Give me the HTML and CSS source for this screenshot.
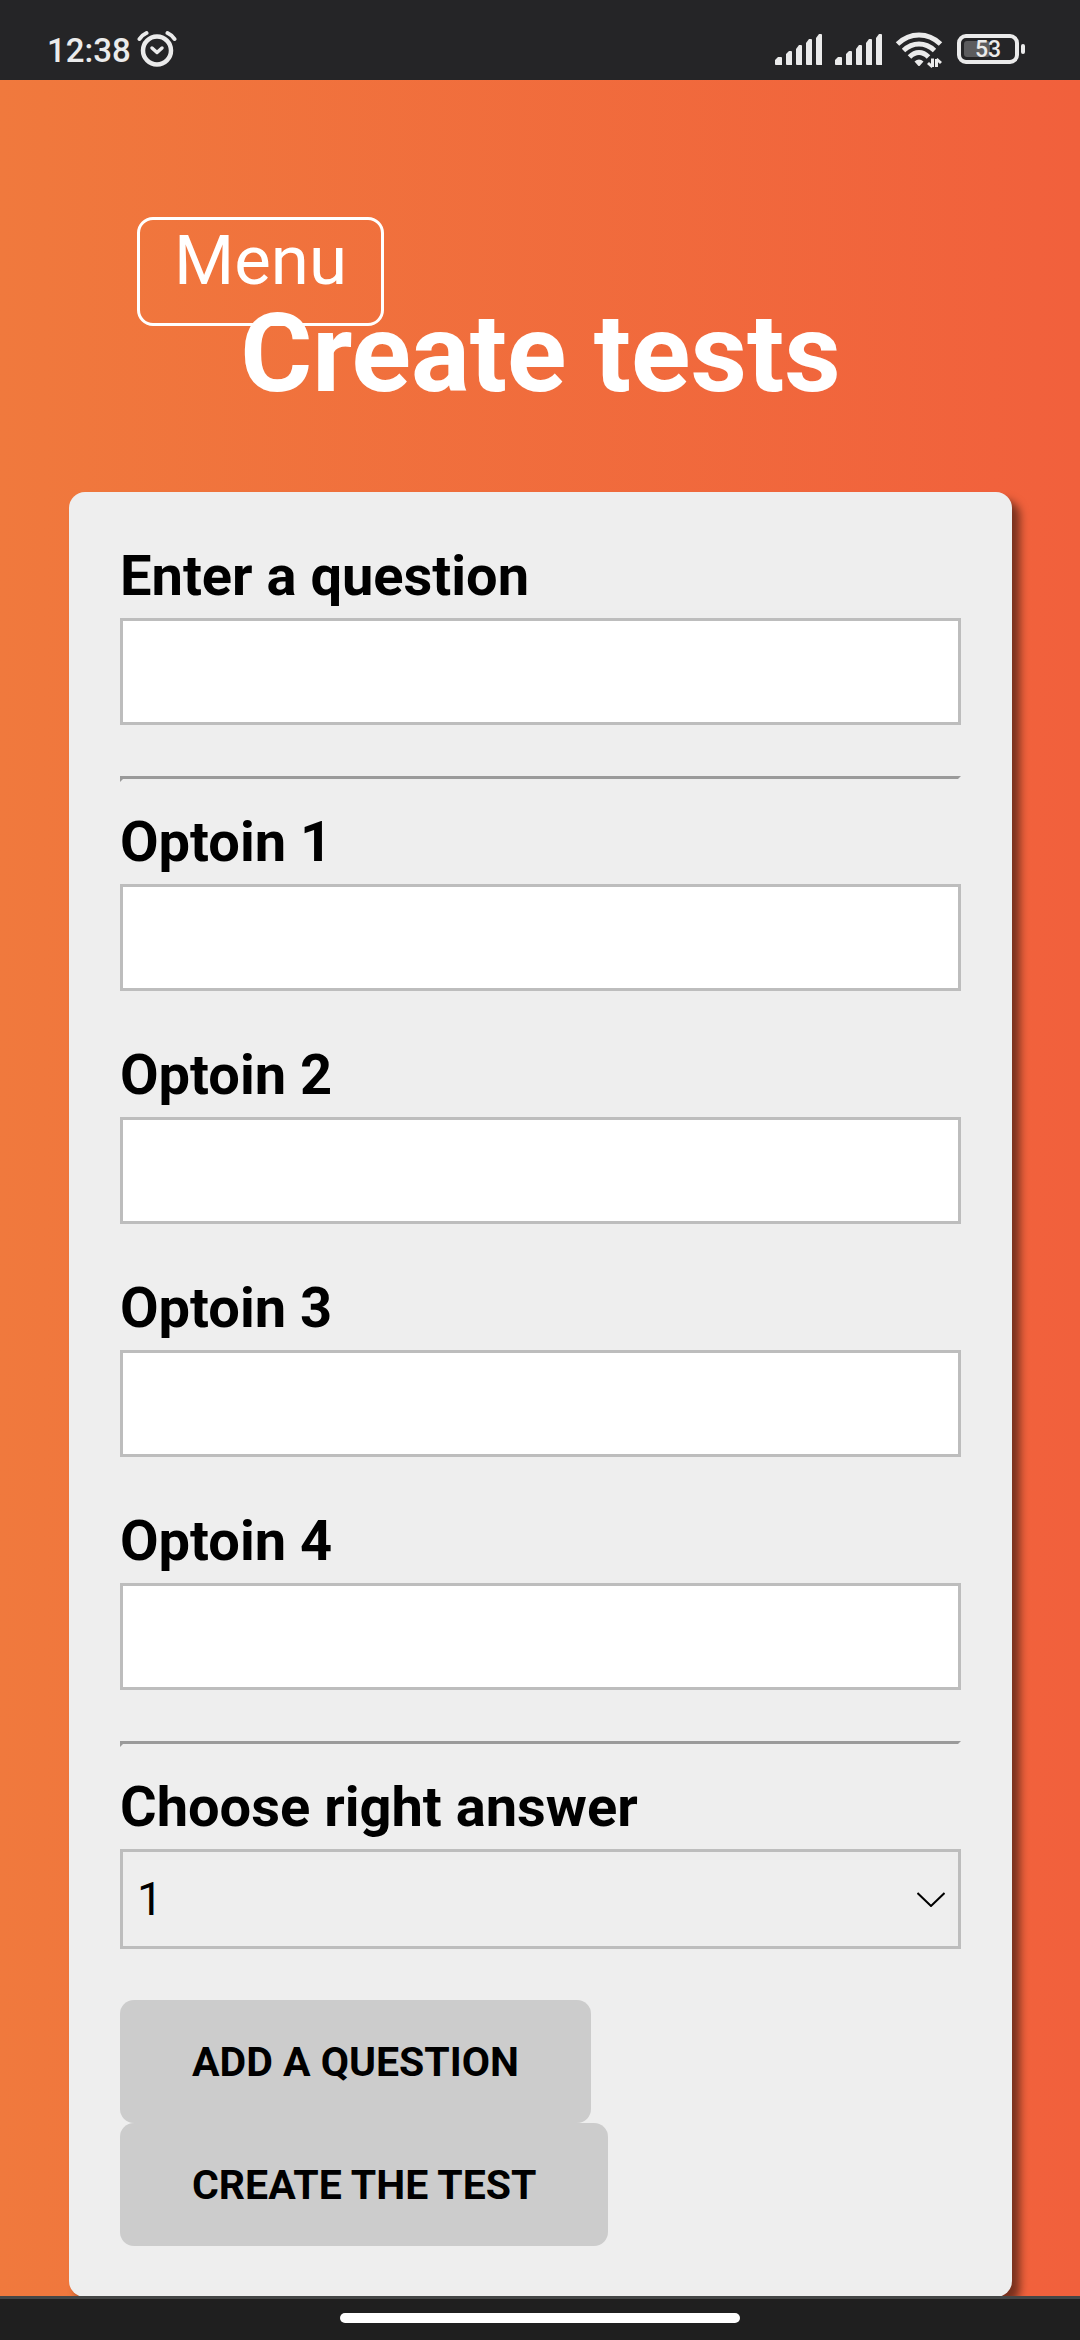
FILE: index.html
```html
<!DOCTYPE html>
<html lang="en">
<head>
<meta charset="utf-8">
<meta name="viewport" content="width=device-width, initial-scale=1">
<title>Create tests</title>
<link rel="stylesheet" href="styles.css">
</head>
<body>
<div class="status">
  <div class="status-left">
    <span class="clock">12:38</span>
    <svg class="icon" width="40" height="40" viewBox="0 0 40 40" fill="none" stroke="currentColor" aria-hidden="true">
      <circle cx="20" cy="21.500" r="14" stroke-width="4.500"/>
      <path d="M2.500 10 Q5 6 9.500 4" stroke-width="4" stroke-linecap="round"/>
      <path d="M30.500 4 Q35 6 37.500 10" stroke-width="4" stroke-linecap="round"/>
      <path d="M15 19l5 4.500 5-4.500" stroke-width="3.500" stroke-linecap="round" stroke-linejoin="round"/>
    </svg>
  </div>
  <div class="status-right">
    <svg class="icon" width="48" height="40" viewBox="0 0 48 40" fill="currentColor" aria-hidden="true">
      <path d="M0 34.500V31l3-3h3a1 1 0 0 1 1 1v7H1a1 1 0 0 1-1-1.500zM11 35V25l3-3h2a1 1 0 0 1 1 1v13h-5a1 1 0 0 1-1-1zM21 35V20l3-4h2a1 1 0 0 1 1 1v19h-5a1 1 0 0 1-1-1zM31 35V14l3-4h2a1 1 0 0 1 1 1v25h-5a1 1 0 0 1-1-1zM41 35V9l3-4h2a1 1 0 0 1 1 1v30h-5a1 1 0 0 1-1-1z"/>
    </svg>
    <svg class="icon" width="48" height="40" viewBox="0 0 48 40" fill="currentColor" aria-hidden="true">
      <path d="M0 34.500V31l3-3h3a1 1 0 0 1 1 1v7H1a1 1 0 0 1-1-1.500zM11 35V25l3-3h2a1 1 0 0 1 1 1v13h-5a1 1 0 0 1-1-1zM21 35V20l3-4h2a1 1 0 0 1 1 1v19h-5a1 1 0 0 1-1-1zM31 35V14l3-4h2a1 1 0 0 1 1 1v25h-5a1 1 0 0 1-1-1zM41 35V9l3-4h2a1 1 0 0 1 1 1v30h-5a1 1 0 0 1-1-1z"/>
    </svg>
    <svg class="icon" width="48" height="40" viewBox="0 0 48 40" fill="none" stroke="currentColor" aria-hidden="true">
      <g stroke-width="5">
        <path d="M2.500 15Q12 6 24 6T45.500 15"/>
        <path d="M8.500 21.500Q15.500 15 24 15T39.500 21.500"/>
        <path d="M14.500 28Q19 23.500 24 23.500T33.500 28"/>
      </g>
      <path d="M19.500 32.500Q24 28.500 28.500 32.500L25 36.500Q24 37.500 23 36.500z" fill="currentColor" stroke="none"/>
      <path d="M37.500 29.500V38M33 34l4.500 4M41.500 38V30M41.500 30l4.500 4" stroke-width="3"/>
    </svg>
    <div class="battery">
      <span class="battery-level"></span>
      <span class="battery-text">53</span>
      <span class="battery-tip"></span>
    </div>
  </div>
</div>

<main class="page">
  <header class="top">
    <button class="menu" type="button">Menu</button>
    <h1 class="title">Create tests</h1>
  </header>

  <form class="card">
    <div class="field">
      <label class="label" for="question">Enter a question</label>
      <input class="input" id="question" type="text">
    </div>
    <hr class="rule">
    <div class="field">
      <label class="label" for="option1">Optoin 1</label>
      <input class="input" id="option1" type="text">
    </div>
    <div class="field">
      <label class="label" for="option2">Optoin 2</label>
      <input class="input" id="option2" type="text">
    </div>
    <div class="field">
      <label class="label" for="option3">Optoin 3</label>
      <input class="input" id="option3" type="text">
    </div>
    <div class="field">
      <label class="label" for="option4">Optoin 4</label>
      <input class="input" id="option4" type="text">
    </div>
    <hr class="rule">
    <div class="field">
      <label class="label" for="answer">Choose right answer</label>
      <div class="select-wrap">
        <select class="select" id="answer">
          <option>1</option>
          <option>2</option>
          <option>3</option>
          <option>4</option>
        </select>
        <svg class="chevron" width="28" height="16" viewBox="0 0 28 16" fill="none" stroke="#000" stroke-width="2" aria-hidden="true"><path d="M0.500 2L14 15 27.500 2"/></svg>
      </div>
    </div>
    <div class="actions">
      <button class="button" type="button">ADD A QUESTION</button>
      <button class="button" type="submit">CREATE THE TEST</button>
    </div>
  </form>
</main>

<div class="navbar"><span class="pill"></span></div>
</body>
</html>
```
FILE: styles.css
```css
* {
  box-sizing: border-box;
}

body {
  margin: 0;
  min-height: 100vh;
  display: flex;
  flex-direction: column;
  font-family: Roboto, "Liberation Sans", sans-serif;
  color: #000;
  background: linear-gradient(to right, #f0793d, #f1603c);
}

/* Status bar */
.status {
  display: flex;
  justify-content: space-between;
  height: 80px;
  padding: 29px 55px 0 47px;
  background: #252527;
  color: #ebebeb;
}

.status-left,
.status-right {
  display: flex;
  height: 40px;
}

.status-left {
  gap: 6px;
}

.status-right {
  gap: 12px;
}

.clock {
  font-size: 33px;
  font-weight: 500;
  line-height: 44px;
}

.icon {
  display: block;
  flex: none;
}

.battery {
  position: relative;
  display: flex;
  align-items: center;
  justify-content: center;
  width: 62px;
  height: 30px;
  margin: 5px 6px 0 2px;
  padding-top: 2px;
  border: 4px solid #ebebeb;
  border-radius: 9px;
}

.battery-level {
  position: absolute;
  top: 3px;
  bottom: 3px;
  left: 3px;
  width: 26px;
  border-radius: 3px;
  background: #5c5c5e;
}

.battery-text {
  position: relative;
  font-size: 23px;
  font-weight: 500;
  line-height: 24px;
}

.battery-tip {
  position: absolute;
  top: 6px;
  right: -10px;
  width: 4px;
  height: 10px;
  border-radius: 2px;
  background: #ebebeb;
}

/* Header */
.page {
  flex: 1;
  padding: 137px 68px 0 69px;
}

.top {
  display: flex;
  flex-direction: column;
}

.menu {
  align-self: flex-start;
  height: 109px;
  margin: 0 0 0 68px;
  padding: 0 34px 22px;
  border: 3px solid #fff;
  border-radius: 16px;
  background: none;
  color: #fff;
  font: 400 69px/81px Roboto, "Liberation Sans", sans-serif;
}

.title {
  margin: -37px 0 74px;
  color: #fff;
  font-size: 110px;
  font-weight: 700;
  line-height: 129px;
  text-align: center;
}

/* Form card */
.card {
  padding: 51px;
  border-radius: 16px;
  background: #eee;
  box-shadow: 8px 8px 8px rgba(0, 0, 0, 0.5);
}

.field {
  display: flex;
  flex-direction: column;
  gap: 9px;
  margin-bottom: 51px;
}

.label {
  font-size: 56px;
  font-weight: 700;
  line-height: 66px;
}

.input {
  width: 100%;
  height: 107px;
  padding: 0 14px;
  border: 3px solid #bdbdbd;
  border-radius: 0;
  background: #fff;
  font: 400 46px Roboto, "Liberation Sans", sans-serif;
}

.rule {
  height: 6px;
  margin: 0 0 27px;
  border: 3px solid;
  border-color: #9a9a9a #eee #eee #9a9a9a;
}

.select-wrap {
  display: grid;
  align-items: center;
}

.select {
  grid-area: 1 / 1;
  width: 100%;
  height: 100px;
  padding: 0 14px;
  border: 3px solid #bdbdbd;
  border-radius: 0;
  background: #eee;
  color: #000;
  appearance: none;
  font: 400 46px Roboto, "Liberation Sans", sans-serif;
}

.chevron {
  grid-area: 1 / 1;
  justify-self: end;
  margin-right: 16px;
  pointer-events: none;
}

.actions {
  display: flex;
  flex-direction: column;
  align-items: flex-start;
}

.button {
  height: 123px;
  padding: 0 72px;
  border: 0;
  border-radius: 14px;
  background: #ccc;
  color: #000;
  font: 700 41px Roboto, "Liberation Sans", sans-serif;
}

/* Gesture bar */
.navbar {
  position: sticky;
  bottom: 0;
  display: flex;
  justify-content: center;
  height: 44px;
  margin-top: -1px;
  padding-top: 14px;
  border-top: 3px solid #444646;
  background: #1f1f1f;
}

.pill {
  width: 37%;
  height: 10px;
  border-radius: 5px;
  background: #fff;
}
```
